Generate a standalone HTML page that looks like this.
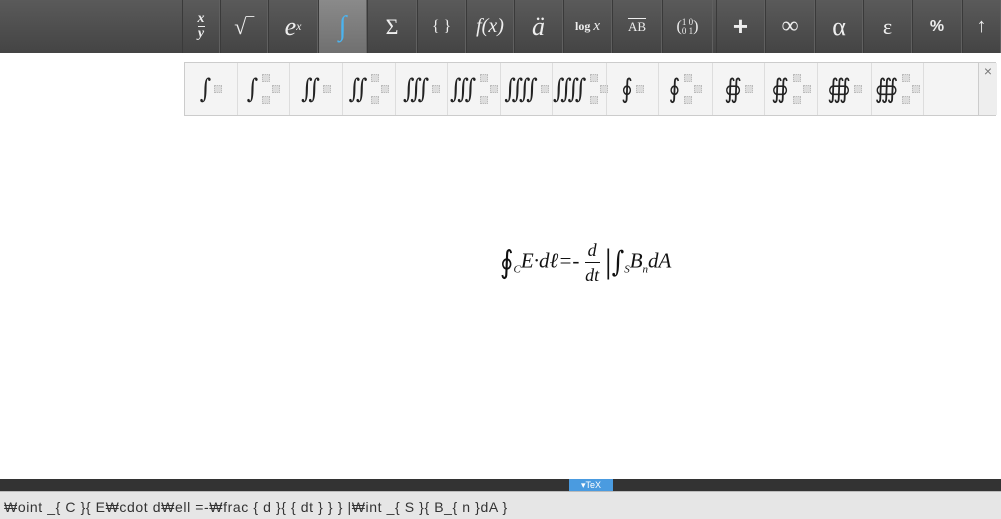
<!DOCTYPE html>
<html><head><style>
body{margin:0;width:1001px;height:519px;background:#fff;position:relative;overflow:hidden;font-family:"Liberation Serif",serif}
#tb{position:absolute;left:0;top:0;width:1001px;height:53px;background:linear-gradient(#5a5a5a,#444)}
.b{position:absolute;top:0;height:53px;border-left:1px solid #3a3a3a;border-right:1px solid #606060;box-sizing:border-box;color:#eee;display:flex;align-items:center;justify-content:center;font-size:22px;font-style:italic}
.n{font-style:normal}
#pn{position:absolute;left:184px;top:62px;width:812px;height:54px;border:1px solid #ccc;box-sizing:border-box;background:#f4f4f4}
.c{position:absolute;top:0;height:52px;border-right:1px solid #ddd;box-sizing:border-box;display:flex;align-items:center;justify-content:center;font-size:22px;color:#222}
.g{font-family:"DejaVu Serif",serif;font-style:normal;transform:scaleY(1.2)}
.s{display:inline-block;width:6px;height:6px;border:1px dotted #bbb;background:#ddd;margin-left:3px;vertical-align:middle}
.w{position:relative;display:inline-block;width:22px;height:30px}
.w i{position:absolute;width:6px;height:6px;border:1px dotted #bbb;background:#ddd}
#bar{position:absolute;left:0;top:479px;width:1001px;height:12px;background:#333}
#tex{position:absolute;left:569px;top:479px;width:44px;height:12px;background:#4a9be0;color:#fff;font:9px "Liberation Sans",sans-serif;text-align:center;line-height:12px}
#src{position:absolute;left:0;top:491px;width:1001px;height:28px;background:#e6e6e6;border-top:1px solid #bbb;box-sizing:border-box;font:14px "Liberation Sans",sans-serif;color:#333;padding:7px 0 0 4px;letter-spacing:0.6px;white-space:nowrap}
</style></head><body>
<div id="tb">
<div class="b" style="left:182px;width:38px;font-size:14px;flex-direction:column;line-height:14px;font-weight:bold"><span style="border-bottom:1px solid #eee">x</span><span>y</span></div>
<div class="b n" style="left:220px;width:48px">√‾</div>
<div class="b" style="left:268px;width:50px;font-size:26px">e<sup style="font-size:12px">x</sup></div>
<div class="b" style="left:318px;width:49px;background:linear-gradient(#8a8a8a,#707070);color:#4bb4f0;font-size:28px">∫</div>
<div class="b n" style="left:367px;width:50px">Σ</div>
<div class="b n" style="left:417px;width:49px;font-size:16px">{ }</div>
<div class="b" style="left:466px;width:48px;font-size:20px">f(x)</div>
<div class="b" style="left:514px;width:49px;font-size:26px">ä</div>
<div class="b" style="left:563px;width:49px;font-size:15px"><b class="n" style="font-size:12px">log</b>&thinsp;x</div>
<div class="b n" style="left:612px;width:50px;font-size:13px;text-decoration:overline">AB</div>
<div class="b n" style="left:662px;width:51px;font-size:16px">(<span style="font-size:9px;line-height:9px;display:inline-block">1 0<br>0 1</span>)</div>
<div class="b n" style="left:716px;width:49px;font:bold 26px 'Liberation Sans',sans-serif">+</div>
<div class="b n" style="left:765px;width:50px;font-size:24px">∞</div>
<div class="b n" style="left:815px;width:48px;font-size:26px">α</div>
<div class="b n" style="left:863px;width:49px;font-size:22px">ε</div>
<div class="b n" style="left:912px;width:50px;font:bold 16px 'Liberation Sans',sans-serif">%</div>
<div class="b n" style="left:962px;width:39px;font-size:20px">↑</div>
</div>
<div id="pn">
<div class="c" style="left:0;width:53px"><span class="g">∫</span><i class="s"></i></div>
<div class="c" style="left:53px;width:52px"><span class="g">∫</span><span class="w"><i style="left:4px;top:0"></i><i style="left:14px;top:11px"></i><i style="left:4px;top:22px"></i></span></div>
<div class="c" style="left:105px;width:53px"><span class="g">∬</span><i class="s"></i></div>
<div class="c" style="left:158px;width:53px"><span class="g">∬</span><span class="w"><i style="left:4px;top:0"></i><i style="left:14px;top:11px"></i><i style="left:4px;top:22px"></i></span></div>
<div class="c" style="left:211px;width:52px"><span class="g">∭</span><i class="s"></i></div>
<div class="c" style="left:263px;width:53px"><span class="g">∭</span><span class="w"><i style="left:4px;top:0"></i><i style="left:14px;top:11px"></i><i style="left:4px;top:22px"></i></span></div>
<div class="c" style="left:316px;width:52px"><span class="g">⨌</span><i class="s"></i></div>
<div class="c" style="left:368px;width:54px"><span class="g">⨌</span><span class="w"><i style="left:4px;top:0"></i><i style="left:14px;top:11px"></i><i style="left:4px;top:22px"></i></span></div>
<div class="c" style="left:422px;width:52px"><span class="g">∮</span><i class="s"></i></div>
<div class="c" style="left:474px;width:54px"><span class="g">∮</span><span class="w"><i style="left:4px;top:0"></i><i style="left:14px;top:11px"></i><i style="left:4px;top:22px"></i></span></div>
<div class="c" style="left:528px;width:52px"><span class="g">∯</span><i class="s"></i></div>
<div class="c" style="left:580px;width:53px"><span class="g">∯</span><span class="w"><i style="left:4px;top:0"></i><i style="left:14px;top:11px"></i><i style="left:4px;top:22px"></i></span></div>
<div class="c" style="left:633px;width:54px"><span class="g">∰</span><i class="s"></i></div>
<div class="c" style="left:687px;width:52px"><span class="g">∰</span><span class="w"><i style="left:4px;top:0"></i><i style="left:14px;top:11px"></i><i style="left:4px;top:22px"></i></span></div>
<div style="position:absolute;left:793px;top:0;width:18px;height:52px;border-left:1px solid #ccc;background:#eee;color:#777;font:14px 'Liberation Sans',sans-serif;text-align:center">×</div>
</div>
<div style="position:absolute;left:500px;top:238px;font-size:21px;font-style:italic;color:#111;white-space:nowrap">
<span class="g" style="font-size:26px;display:inline-block;vertical-align:-4px">∮</span><sub style="font-size:11px">C</sub>E·dℓ=-&nbsp;<span style="display:inline-block;vertical-align:middle;text-align:center;font-size:18px;line-height:24px"><span style="display:block;border-bottom:1px solid #111;padding:0 3px">d</span>dt</span>&nbsp;<span style="font-style:normal;font-size:34px;vertical-align:-5px">|</span><span class="g" style="font-size:24px;display:inline-block;vertical-align:-3px">∫</span><sub style="font-size:11px">S</sub>B<sub style="font-size:11px">n</sub>dA</div>
<div id="bar"></div><div id="tex">▾TeX</div>
<div id="src">₩oint _{ C }{ E₩cdot d₩ell =-₩frac { d }{ { dt } }  } |₩int _{ S }{ B_{ n }dA }</div>
</body></html>
